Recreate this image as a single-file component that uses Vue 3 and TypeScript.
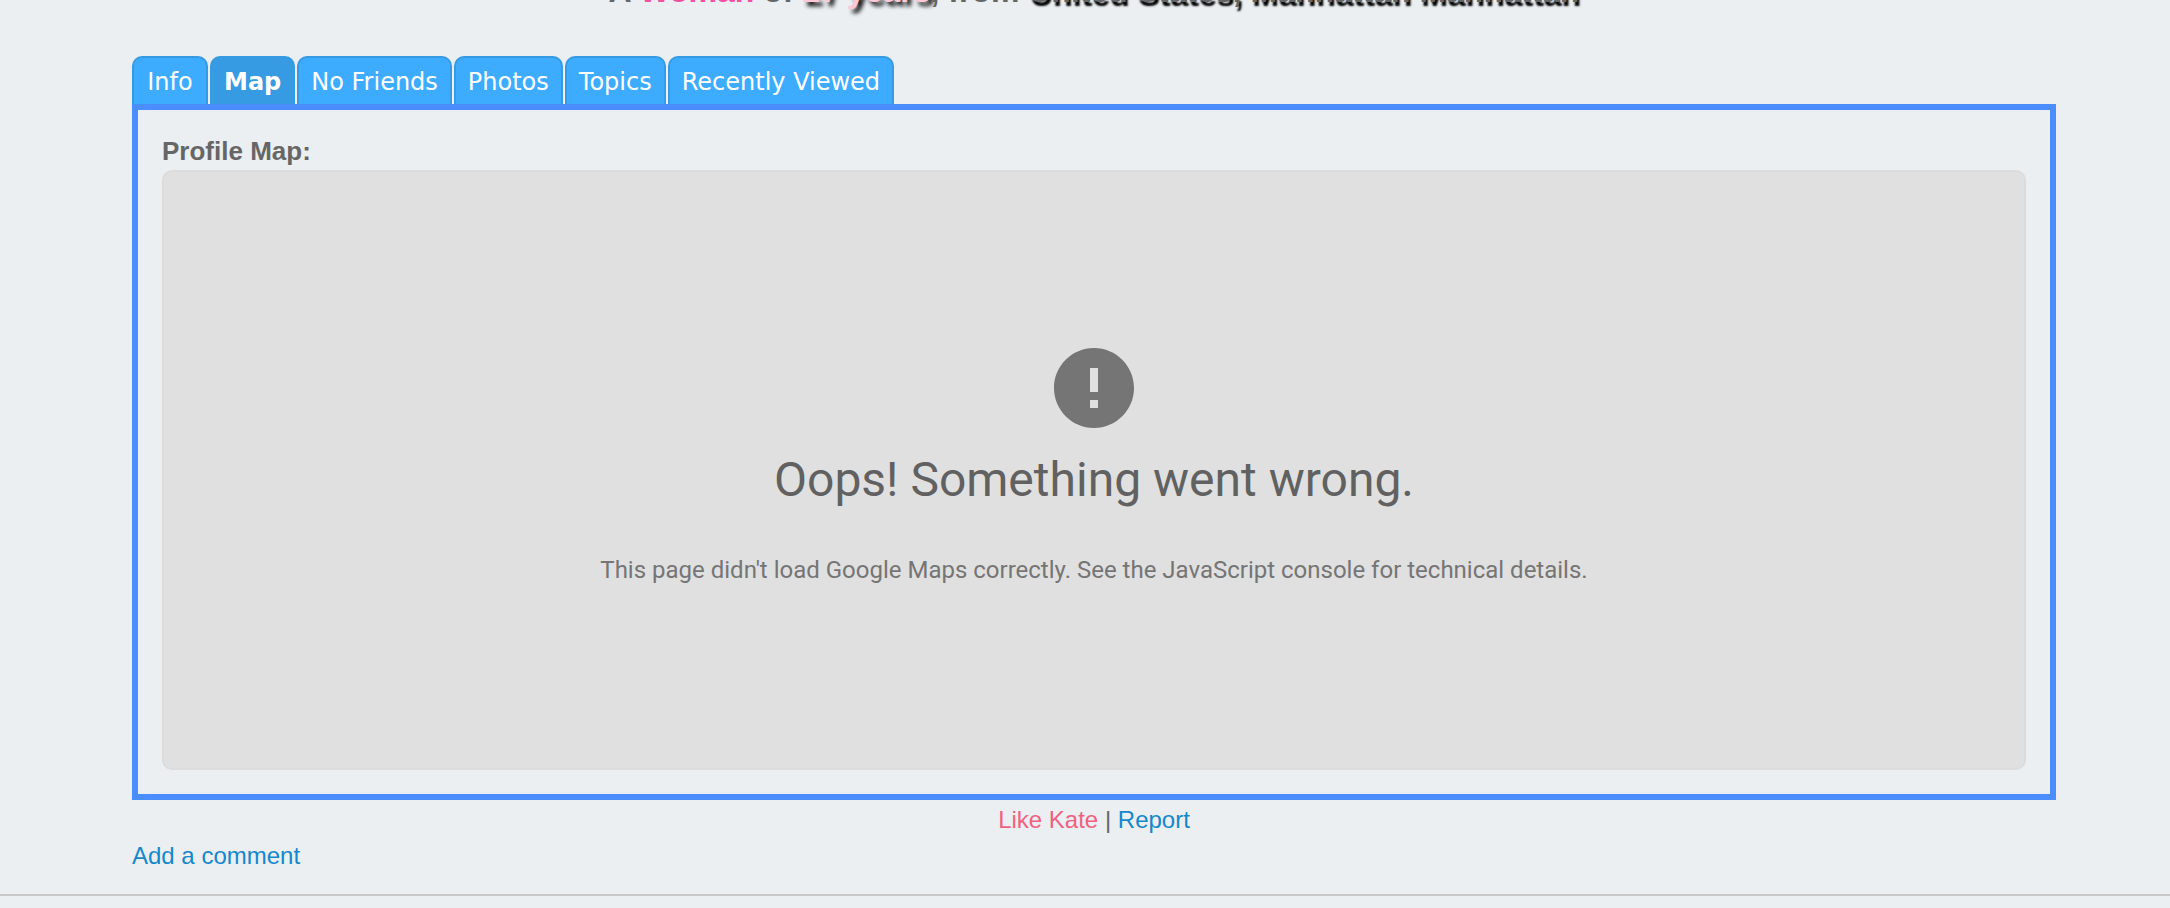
<script setup lang="ts">
import { ref } from 'vue'

const tabs = ['Info', 'Map', 'No Friends', 'Photos', 'Topics', 'Recently Viewed'] as const
type Tab = (typeof tabs)[number]
const active = ref<Tab>('Map')
</script>

<template>
  <div class="page">
    <main class="profile">
      <header class="summary">
        <h1>
          A <span class="gender">Woman</span> of <span class="age">27 years</span>, from
          <span class="place">United States, Manhattan Manhattan</span>
        </h1>
      </header>

      <nav class="tabs" role="tablist" aria-label="Profile sections">
        <button
          v-for="tab in tabs"
          :key="tab"
          type="button"
          role="tab"
          class="tab"
          :class="{ active: tab === active }"
          :aria-selected="tab === active"
          @click="active = tab"
        >{{ tab }}</button>
      </nav>

      <section class="panel">
        <h2 class="label">Profile Map:</h2>
        <div class="map">
          <svg class="icon" viewBox="0 0 24 24" aria-hidden="true">
            <path d="M12 2C6.48 2 2 6.48 2 12s4.48 10 10 10 10-4.48 10-10S17.52 2 12 2zm1 15h-2v-2h2v2zm0-4h-2V7h2v6z" />
          </svg>
          <p class="title">Oops! Something went wrong.</p>
          <p class="message">This page didn't load Google Maps correctly. See the JavaScript console for technical details.</p>
        </div>
      </section>

      <div class="actions"><a class="like" href="#like">Like Kate</a> | <a href="#report">Report</a></div>
      <div class="comment"><a href="#comment">Add a comment</a></div>
    </main>
    <hr class="divider" />
  </div>
</template>

<style>
body {
  margin: 0;
  background: #ebeff2;
}
</style>

<style scoped>
.page {
  padding-bottom: 12px;
  color: #666;
  font: 24px/36px "Liberation Sans", Arial, sans-serif;
}

.profile {
  margin: 0 114px 0 132px;
}

.summary {
  display: flex;
  align-items: flex-end;
  justify-content: center;
  height: 10px;
  padding-bottom: 46px;
  overflow: hidden;
}

h1 {
  margin: 0;
  font-size: 32px;
  line-height: 38px;
  white-space: nowrap;
}

.gender {
  color: #f54ea2;
}

.age {
  color: #ffc8d6;
  text-shadow: 4px 4px 4px #000;
}

.place {
  text-shadow: 2px 4px 2px #000;
}

.tabs {
  display: flex;
  gap: 2px;
}

.tab {
  min-width: 76px;
  height: 48px;
  padding: 2px 12px 0;
  border: 2px solid #369be2;
  border-bottom: 0;
  border-radius: 10px 10px 0 0;
  background: #3dacff;
  color: #fff;
  font: 24px/44px Verdana, "DejaVu Sans", sans-serif;
  cursor: pointer;
}

.tab.active {
  background: #369be2;
  font-weight: bold;
}

.panel {
  padding: 24px;
  border: 6px solid #498dff;
}

.label {
  margin: 0 0 2px;
  font-size: 26px;
  line-height: 34px;
}

.map {
  display: flex;
  flex-direction: column;
  align-items: center;
  box-sizing: border-box;
  min-height: 600px;
  padding-top: 168px;
  border: 2px solid #dcdcdc;
  border-radius: 10px;
  background: #e0e0e0;
  font-family: Roboto, sans-serif;
  text-align: center;
}

.icon {
  width: 96px;
  height: 96px;
  fill: #757575;
}

.title {
  margin: 16px 0 0;
  color: #616161;
  font-size: 48px;
  line-height: 56px;
}

.message {
  margin: 46px 0 0;
  color: #757575;
  font-size: 24px;
  line-height: 32px;
}

.actions {
  margin-top: 2px;
  text-align: center;
}

a {
  color: #1588cc;
  text-decoration: none;
}

.like {
  color: #f0627f;
}

.divider {
  height: 2px;
  margin: 20px 0 0;
  border: 0;
  background: #c8c8c8;
}
</style>
